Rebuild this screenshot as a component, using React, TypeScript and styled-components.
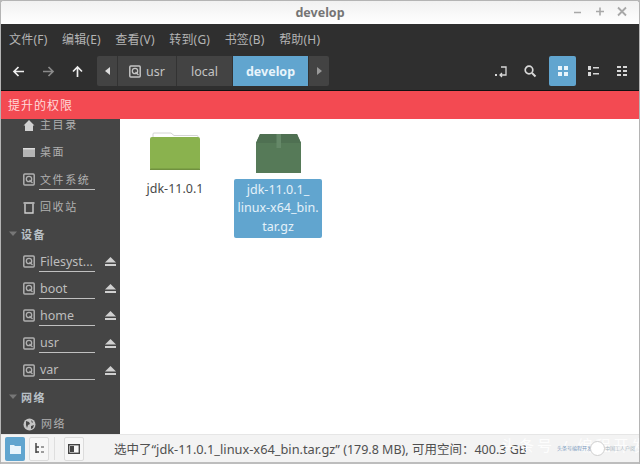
import React from "react";
import styled, { createGlobalStyle } from "styled-components";

const Global = createGlobalStyle`
  html, body { margin: 0; padding: 0; background: #b9b9b9; }
  #root { width: 640px; height: 464px; }
`;

const Win = styled.div`
  width: 640px; height: 464px; box-sizing: border-box; display: flex; flex-direction: column;
  overflow: hidden; border: 1px solid #b4b4b4; border-bottom: 0; border-radius: 4px 4px 0 0; background: #fff;
  font-family: "Noto Sans", "Noto Sans CJK SC", sans-serif;
`;
const TitleBar = styled.div`
  height: 23px; flex: none; display: flex; align-items: center; justify-content: center; position: relative;
  background: linear-gradient(#f1f1f1, #ffffff); color: #757575; font-weight: 700; font-size: 12.5px;
`;
const WinButtons = styled.div`
  position: absolute; right: 10px; top: 3px; display: flex; gap: 8px; align-items: center; color: #a8a8a8;
`;
const MenuBar = styled.div`
  height: 31px; flex: none; background: #2f2f2f; display: flex; align-items: center; padding-left: 8px; gap: 14.5px;
  color: #b4b4b4; font-size: 12px; letter-spacing: 0.2px; padding-bottom: 2px; box-sizing: border-box;
`;
const ToolBar = styled.div`
  height: 35px; flex: none; background: #2f2f2f; display: flex; align-items: flex-start; border-bottom: 1px solid #111;
  box-sizing: content-box; padding-top: 0;
`;
const NavGroup = styled.div`
  width: 96px; height: 30px; margin-top: 1px; padding: 0 13px 0 11px; box-sizing: border-box; display: flex; align-items: center; justify-content: space-between; color: #eee;
`;
const Crumbs = styled.div`
  height: 30px; margin-top: 1px; display: flex; background: #434343; border-radius: 2px; overflow: hidden; color: #c4c4c4; font-size: 12.5px;
`;
const Crumb = styled.div<{ $w: number; $on?: boolean }>`
  width: ${(p) => p.$w}px; display: flex; align-items: center; justify-content: center; gap: 5px;
  border-right: 1px solid #333; box-sizing: border-box;
  background: ${(p) => (p.$on ? "#61a5cf" : "transparent")};
  color: ${(p) => (p.$on ? "#e8f4fb" : "#c4c4c4")};
  font-weight: ${(p) => (p.$on ? 700 : 400)};
  &:last-child { border-right: 0; }
`;
const Spacer = styled.div`flex: 1;`;
const Tools = styled.div`
  display: flex; align-items: center; height: 30px; margin-top: 1px; margin-right: 2px; color: #d8d8d8;
`;
const ToolBtn = styled.div<{ $on?: boolean }>`
  width: ${(p) => (p.$on ? 27 : 29)}px; height: 30px; margin: 0 ${(p) => (p.$on ? 3 : 0)}px 0 ${(p) => (p.$on ? 5 : 0)}px; display: flex; align-items: center; justify-content: center;
  border-radius: 2px; background: ${(p) => (p.$on ? "#61a5cf" : "transparent")};
  color: ${(p) => (p.$on ? "#e8f4fb" : "#d8d8d8")};
`;
const Banner = styled.div`
  height: 28px; flex: none; background: #f34a52; color: #ffd9d9; font-size: 12px; display: flex; align-items: center;
  padding-left: 7px; letter-spacing: 1px;
`;
const Main = styled.div`
  flex: 1; min-height: 0; display: flex;
`;
const Side = styled.div`
  width: 119px; flex: none; background: #454545; overflow: hidden; color: #b5b5b5;
`;
const SideInner = styled.div`
  margin-top: -7px; display: flex; flex-direction: column;
`;
const Row = styled.div`
  height: 27.2px; flex: none; display: flex; align-items: center; padding-left: 22px; gap: 4px; font-size: 11px;
  position: relative; color: #b0b0b0;
`;
const Label = styled.span<{ $mounted?: boolean; $latin?: boolean }>`
  width: ${(p) => (p.$mounted ? "56px" : "auto")}; display: block; box-sizing: border-box; padding-left: 1px;
  font-size: ${(p) => (p.$latin ? 12.5 : 11)}px; letter-spacing: ${(p) => (p.$latin ? 0 : 1.6)}px; line-height: 16px; white-space: nowrap;
  padding-bottom: 1px; margin-top: ${(p) => (p.$mounted ? 2 : 0)}px;
  border-bottom: ${(p) => (p.$mounted ? "1px solid #c0c0c0" : "0")}; color: ${(p) => (p.$latin ? "#bdbdbd" : "#b0b0b0")};
`;
const Eject = styled.svg`
  margin-left: 6px; flex: none;
`;
const Header = styled.div`
  height: 27.2px; flex: none; display: flex; align-items: center; padding-left: 8px; gap: 4px; font-size: 11px;
  font-weight: 700; letter-spacing: 1.6px; color: #b9c0c6;
`;
const Files = styled.div`
  flex: 1; background: #fff; display: flex; align-items: flex-start; padding: 12px 0 0 8px; gap: 9px;
`;
const FileItem = styled.div`
  width: 94px; display: flex; flex-direction: column; align-items: center; flex: none;
`;
const FileIcon = styled.svg<{ $top: number }>`
  margin-top: ${(p) => p.$top}px; flex: none;
`;
const FileName = styled.div<{ $on?: boolean }>`
  box-sizing: border-box; width: ${(p) => (p.$on ? "88px" : "auto")}; text-align: center; font-size: 12.5px; line-height: 18.5px;
  margin-top: ${(p) => (p.$on ? 6 : 9)}px; padding: ${(p) => (p.$on ? "1.5px 0 2px" : 0)};
  border-radius: 2px; background: ${(p) => (p.$on ? "#61a5cf" : "transparent")};
  color: ${(p) => (p.$on ? "#e4f1f9" : "#4a4a4a")}; white-space: pre-line;
`;
const Status = styled.div`
  height: 30px; flex: none; background: #f3f3f3; border-top: 1px solid #e6e6e6; border-bottom: 2px solid #bdbdbd;
  box-sizing: border-box; display: flex; align-items: center; padding-left: 4px; position: relative; font-size: 12.5px; color: #505050;
`;
const StatusBtn = styled.div<{ $on?: boolean }>`
  width: 20px; height: 24px; box-sizing: border-box; display: flex; align-items: center; justify-content: center; margin-right: 4px;
  border-radius: 2px; background: ${(p) => (p.$on ? "#61a5cf" : "#f7f7f7")}; border: ${(p) => (p.$on ? "0" : "1px solid #dcdcdc")};
  color: ${(p) => (p.$on ? "#e8f4fb" : "#444")};
`;
const Sep = styled.div`width: 1px; height: 23px; background: #dedede; margin: 0 9px 0 1px;`;
const StatusText = styled.div`
  margin-left: 26px; white-space: nowrap;
`;
const StatusName = styled.span`
  font-size: 12.8px;
`;
const Watermark = styled.div`
  position: absolute; left: 500px; top: 0; color: rgba(255,255,255,0.92); font-size: 15px; line-height: 20px; letter-spacing: 3px; white-space: nowrap;
`;
const Badge = styled.div`
  position: absolute; left: 589px; top: 6px; width: 15px; height: 15px; border-radius: 50%; background: #fff; border: 1px solid #cfcfcf; box-sizing: border-box;
`;
const BadgeText = styled.div<{ $left: number; $color: string }>`
  position: absolute; left: ${(p) => p.$left}px; top: 9px; font-size: 5px; line-height: 8px; color: ${(p) => p.$color}; white-space: nowrap;
`;

const Disk = () => (
  <svg width="12" height="13" viewBox="0 0 12 13" style={{ flex: "none" }}>
    <rect x=".8" y="1" width="10.4" height="11" rx="1" fill="none" stroke="currentColor" strokeWidth="1.5" />
    <circle cx="6" cy="6" r="2.7" fill="none" stroke="currentColor" strokeWidth="1.3" />
    <path d="M6.5 7l3 3" stroke="currentColor" strokeWidth="1.3" />
  </svg>
);
const Home = () => (
  <svg width="12" height="13" viewBox="0 0 12 13" style={{ flex: "none" }}>
    <path d="M6 1l5.5 5.5H10V12H2V6.500H.5z" fill="#d0d0d0" />
  </svg>
);
const Desktop = () => (
  <svg width="12" height="13" viewBox="0 0 12 13" style={{ flex: "none" }}>
    <rect x="0" y="2" width="12" height="9" fill="#b4b4b4" />
    <rect x="0" y="2" width="12" height="1.4" fill="#dedede" />
  </svg>
);
const Trash = () => (
  <svg width="12" height="13" viewBox="0 0 12 13" style={{ flex: "none" }}>
    <path d="M.5 2h11" stroke="#cfcfcf" strokeWidth="1.6" />
    <path d="M2 3v9h8V3" fill="none" stroke="#cfcfcf" strokeWidth="1.4" />
  </svg>
);
const Globe = () => (
  <svg width="13" height="13" viewBox="0 0 13 13" style={{ flex: "none" }}>
    <circle cx="6.5" cy="6.5" r="6" fill="#c4c4c4" />
    <path d="M3 3l3 1 1 2-2 1-1 3-1-3zM8 2l2 2-1 1zM8 8l3-1-1 3-2 1z" fill="#454545" />
  </svg>
);
const EjectIcon = () => (
  <Eject width="11" height="9" viewBox="0 0 11 9">
    <path d="M5.500 0L11 5.500H0z" fill="#d0d0d0" />
    <rect x="0" y="7" width="11" height="2" fill="#d0d0d0" />
  </Eject>
);
const Tri = () => (
  <svg width="8" height="6" viewBox="0 0 8 6" style={{ flex: "none" }}>
    <path d="M0 .5h8L4 5z" fill="#777" />
  </svg>
);
const Arrow = ({ d, color }: { d: string; color: string }) => (
  <svg width="13" height="13" viewBox="0 0 13 13">
    <path d={d} fill="none" stroke={color} strokeWidth="1.7" />
  </svg>
);

const mounts = ["Filesyst...", "boot", "home", "usr", "var"];

export default function App() {
  return (
    <Win>
      <Global />
      <TitleBar>
        develop
        <WinButtons>
          <svg width="14" height="14" viewBox="0 0 14 14"><path d="M3 8.5h7" stroke="currentColor" strokeWidth="1.6" /></svg>
          <svg width="14" height="14" viewBox="0 0 14 14"><path d="M3 7.500h8M7 3.500v8" stroke="currentColor" strokeWidth="1.6" /></svg>
          <svg width="14" height="14" viewBox="0 0 14 14"><path d="M3 3.500l8 8M11 3.500l-8 8" stroke="currentColor" strokeWidth="1.8" /></svg>
        </WinButtons>
      </TitleBar>
      <MenuBar>
        <span>文件(F)</span><span>编辑(E)</span><span>查看(V)</span><span>转到(G)</span><span>书签(B)</span><span>帮助(H)</span>
      </MenuBar>
      <ToolBar>
        <NavGroup>
          <Arrow d="M12 6.500H2M6.500 2L2 6.500 6.500 11" color="#eeeeee" />
          <Arrow d="M1 6.500h10M6.500 2L11 6.500 6.500 11" color="#8a8a8a" />
          <Arrow d="M6.500 12V2M2 6.500L6.500 2 11 6.500" color="#eeeeee" />
        </NavGroup>
        <Crumbs>
          <Crumb $w={21}><svg width="5" height="8" viewBox="0 0 5 8"><path d="M5 0v8L0 4z" fill="#ddd" /></svg></Crumb>
          <Crumb $w={59}><Disk />usr</Crumb>
          <Crumb $w={56}>local</Crumb>
          <Crumb $w={76} $on>develop</Crumb>
          <Crumb $w={20}><svg width="5" height="8" viewBox="0 0 5 8"><path d="M0 0v8l5-4z" fill="#999" /></svg></Crumb>
        </Crumbs>
        <Spacer />
        <Tools>
          <ToolBtn>
            <svg width="14" height="13" viewBox="0 0 14 13" fill="none"><rect x="1" y="9" width="2" height="2" fill="currentColor" /><path d="M7 2h5v8H6M8 8l-2 2 2 2" stroke="currentColor" strokeWidth="1.3" /></svg>
          </ToolBtn>
          <ToolBtn>
            <svg width="14" height="14" viewBox="0 0 14 14" fill="none"><circle cx="6" cy="6" r="3.8" stroke="currentColor" strokeWidth="1.7" /><path d="M9 9l3.5 3.5" stroke="currentColor" strokeWidth="2" /></svg>
          </ToolBtn>
          <ToolBtn $on>
            <svg width="10" height="10" viewBox="0 0 10 10"><path d="M0 0h4v4H0zM6 0h4v4H6zM0 6h4v4H0zM6 6h4v4H6z" fill="currentColor" /></svg>
          </ToolBtn>
          <ToolBtn>
            <svg width="11" height="10" viewBox="0 0 11 10"><path d="M0 0h3v4H0zM0 6h3v4H0zM5 1h6v1.500H5zM5 7h6v1.500H5z" fill="currentColor" /></svg>
          </ToolBtn>
          <ToolBtn>
            <svg width="11" height="10" viewBox="0 0 11 10"><path d="M0 0h4v2H0zM0 4h4v2H0zM0 8h4v2H0zM6 0h4v2H6zM6 4h4v2H6zM6 8h4v2H6z" fill="currentColor" /></svg>
          </ToolBtn>
        </Tools>
      </ToolBar>
      <Banner>提升的权限</Banner>
      <Main>
        <Side>
          <SideInner>
            <Row><Home /><Label>主目录</Label></Row>
            <Row><Desktop /><Label>桌面</Label></Row>
            <Row><Disk /><Label $mounted>文件系统</Label></Row>
            <Row><Trash /><Label>回收站</Label></Row>
            <Header><Tri />设备</Header>
            {mounts.map((m) => (
              <Row key={m}><Disk /><Label $mounted $latin>{m}</Label><EjectIcon /></Row>
            ))}
            <Header><Tri />网络</Header>
            <Row><Globe /><Label>网络</Label></Row>
          </SideInner>
        </Side>
        <Files>
          <FileItem>
            <FileIcon $top={0} width="50" height="40" viewBox="0 0 50 40">
              <path d="M3 8V3a1 1 0 0 1 1-1h17l3 2.500h23a1 1 0 0 1 1 1V10H3z" fill="#fff" stroke="#d4d4d4" strokeWidth="1" />
              <rect x="0" y="6" width="50" height="33" rx="2" fill="#8ab24e" />
              <rect x="0" y="37.500" width="50" height="1.500" fill="#70913f" />
            </FileIcon>
            <FileName>jdk-11.0.1</FileName>
          </FileItem>
          <FileItem>
            <FileIcon $top={3} width="45" height="39" viewBox="0 0 45 39">
              <path d="M4 0h37l4 9v30H0V9z" fill="#567a58" />
              <path d="M4 0h37l4 9H0z" fill="#4f7052" />
              <rect x="20.500" y="0" width="4.500" height="14" fill="#658868" />
            </FileIcon>
            <FileName $on>{"jdk-11.0.1_\nlinux-x64_bin.\ntar.gz"}</FileName>
          </FileItem>
        </Files>
      </Main>
      <Status>
        <StatusBtn $on>
          <svg width="11" height="10" viewBox="0 0 11 10"><path d="M0 1h4l1 1h6v8H0z" fill="currentColor" /></svg>
        </StatusBtn>
        <StatusBtn>
          <svg width="11" height="11" viewBox="0 0 11 11" fill="none"><path d="M2 0v10M2 4h3M2 9h3" stroke="currentColor" strokeWidth="1.5" /><path d="M7 4h3M7 9h3" stroke="currentColor" strokeWidth="1.2" /></svg>
        </StatusBtn>
        <Sep />
        <StatusBtn>
          <svg width="12" height="10" viewBox="0 0 12 10"><rect x=".7" y=".7" width="10.600" height="8.600" fill="none" stroke="currentColor" strokeWidth="1.4" /><rect x="2" y="2" width="4" height="6" fill="currentColor" /></svg>
        </StatusBtn>
        <StatusText>选中了<StatusName>“jdk-11.0.1_linux-x64_bin.tar.gz”</StatusName> (179.8 MB), 可用空间：400.3 GB</StatusText>
        <Watermark>头条号 / 编程开发</Watermark>
        <BadgeText $left={556} $color="#7d9cc0">头条号编程开发</BadgeText>
        <Badge />
        <BadgeText $left={604} $color="#a9b6bf">中国工人户阅</BadgeText>
      </Status>
    </Win>
  );
}
